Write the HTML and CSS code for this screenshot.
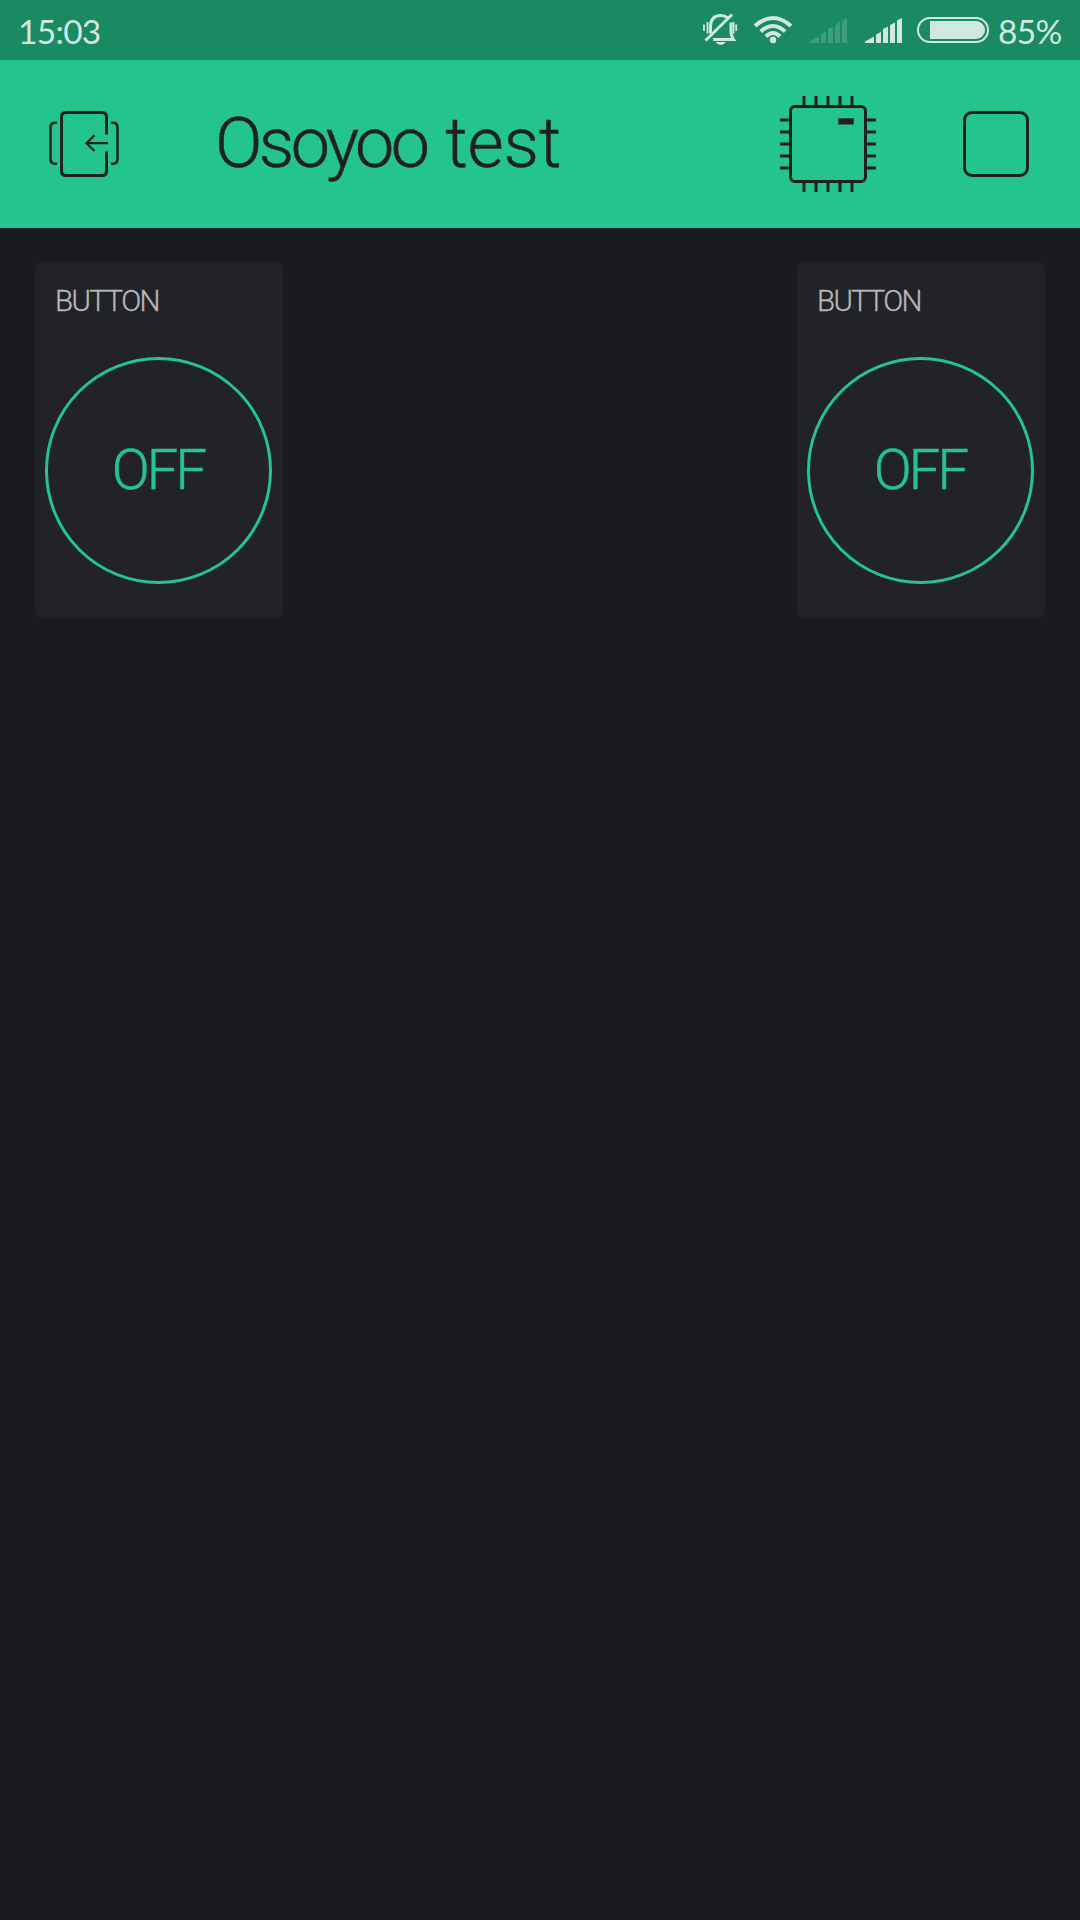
FILE: index.html
```html
<!DOCTYPE html>
<html lang="en">
<head>
<meta charset="utf-8">
<title>Osoyoo test</title>
<link rel="stylesheet" href="styles.css">
</head>
<body>
<div class="status-bar">
  <span class="clock">15:03</span>
  <div class="status-icons">
    <svg class="bell" width="36" height="36" viewBox="702 12 36 36" fill="none" stroke="currentColor" stroke-width="3">
      <path d="M710.5 33.500V25.500Q711.500 15.500 720.500 15.500Q725 15.500 728 18"/>
      <path d="M731 22.500V31.500Q731 36 733.500 39.500H713"/>
      <path d="M705.500 40.500L732 14.500"/>
      <path d="M704 24.500V31M707.500 22V33.500M733.500 22V33.500M736.200 24.500V31" stroke-width="1.800"/>
      <path d="M715.500 42H726Q723.500 45 720.700 45T715.500 42Z" fill="currentColor" stroke="none"/>
    </svg>
    <svg class="wifi" width="40" height="36" viewBox="753 12 40 36" fill="none" stroke="currentColor" stroke-width="4">
      <path d="M755 26Q773 10 791 26M760.800 31.500Q773 20.500 785.200 31.500M766 36.500Q773 29.500 780 36.500"/>
      <circle cx="773" cy="40" r="3.200" fill="currentColor" stroke="none"/>
    </svg>
    <svg class="signal signal-off" width="37" height="36" viewBox="810 12 37 36" fill="currentColor">
      <path d="M810 43V41.500L819 36.500V43ZM821 43V34.500L826 32V43ZM828 43V29L833 26.500V43ZM835 43V25L840 22.500V43ZM842 43V20.500L847 18V43Z"/>
    </svg>
    <svg class="signal signal-on" width="37" height="36" viewBox="810 12 37 36" fill="currentColor">
      <path d="M810 43V41.500L819 36.500V43ZM821 43V34.500L826 32V43ZM828 43V29L833 26.500V43ZM835 43V25L840 22.500V43ZM842 43V20.500L847 18V43Z"/>
    </svg>
    <svg class="battery" width="72" height="26" viewBox="0 0 72 26">
      <rect x="1" y="1" width="70" height="24" rx="12" fill="none" stroke="currentColor" stroke-width="2"/>
      <path d="M13 4H59A9 9 0 0 1 59 22H13Z" fill="currentColor"/>
    </svg>
    <span class="charge">85%</span>
  </div>
</div>

<header class="app-bar">
  <svg class="exit-icon" width="70" height="66" viewBox="49 111 70 66" fill="none" stroke="currentColor" stroke-width="3">
    <path d="M106.500 134.500V117Q106.500 112.500 102 112.500H66Q61.500 112.500 61.500 117V171Q61.500 175.500 66 175.500H102Q106.500 175.500 106.500 171V151.500"/>
    <path d="M57 122.800H55Q50.500 122.800 50.500 127.500V159Q50.500 163.700 55 163.700H57M111 122.800H113Q117.500 122.800 117.500 127.500V159Q117.500 163.700 113 163.700H111" stroke-width="2.500"/>
    <path d="M108 143.200H86.500M94.500 135.300L86.500 143.200L94.500 151" stroke-width="2.200"/>
  </svg>
  <h1 class="title"><span class="tight">Osoyoo</span> test</h1>
  <svg class="chip-icon" width="96" height="96" viewBox="0 0 96 96" fill="none" stroke="currentColor" stroke-width="3">
    <rect x="10.500" y="10.500" width="75" height="75" rx="4.500"/>
    <path d="M24 0V9M36 0V9M48 0V9M60 0V9M72 0V9M24 87V96M36 87V96M48 87V96M60 87V96M72 87V96M0 24H9M0 36H9M0 48H9M0 60H9M0 72H9M87 24H96M87 36H96M87 48H96M87 60H96M87 72H96"/>
    <rect x="58.300" y="22.300" width="15.400" height="6.200" fill="currentColor" stroke="none"/>
  </svg>
  <div class="stop-icon"></div>
</header>

<main class="board">
  <section class="widget">
    <h2 class="label">BUTTON</h2>
    <div class="toggle"><span>OFF</span></div>
  </section>
  <section class="widget">
    <h2 class="label">BUTTON</h2>
    <div class="toggle"><span>OFF</span></div>
  </section>
</main>
</body>
</html>
```

FILE: styles.css
```css
* { box-sizing: border-box; }

body {
  margin: 0;
  min-height: 1920px;
  background: #1a1b20;
  font-family: Roboto, "Liberation Sans", sans-serif;
}

svg { display: block; flex: none; }

.status-bar {
  height: 60px;
  padding: 0 18px 0 18px;
  display: flex;
  align-items: center;
  justify-content: space-between;
  background: #1a8a63;
  color: #d1e8e0;
  font-family: Lato, sans-serif;
  font-size: 33.5px;
  letter-spacing: -0.7px;
  line-height: 60px;
}

.clock { padding-top: 1px; }

.status-icons { display: flex; align-items: center; }

.wifi { margin-left: 15px; }
.signal-off { margin-left: 17px; color: #409d7c; }
.signal-on { margin-left: 18px; }
.battery { margin-left: 15px; }

.charge {
  width: 64px;
  margin-left: 9px;
  padding-top: 1px;
  white-space: nowrap;
}

.app-bar {
  height: 168px;
  padding: 0 51px 0 49px;
  display: flex;
  align-items: center;
  background: #24c48e;
  color: #1f2024;
}

.title {
  flex: 1;
  margin: 0 0 2px 96px;
  font-size: 70px;
  font-weight: 300;
  letter-spacing: -0.2px;
  word-spacing: 2px;
  line-height: 80px;
  white-space: nowrap;
  -webkit-text-stroke: 0.5px currentColor;
}

.tight { letter-spacing: -3.6px; }

.stop-icon {
  width: 66px;
  height: 66px;
  margin-left: 87px;
  border: 3px solid currentColor;
  border-radius: 9px;
}

.board {
  padding: 34px 35px;
  display: flex;
  justify-content: space-between;
}

.widget {
  width: 248px;
  height: 356px;
  padding-top: 20px;
  border-radius: 7px;
  background: #222328;
}

.label {
  margin: 0 0 0 20px;
  color: #b9b9ba;
  font-size: 29.5px;
  font-weight: 300;
  letter-spacing: -1.6px;
  line-height: 38px;
  -webkit-text-stroke: 0.3px currentColor;
}

.toggle {
  width: 227px;
  height: 227px;
  margin: 36.5px 0 0 10px;
  padding-right: 1px;
  display: flex;
  align-items: center;
  justify-content: center;
  border: 3px solid #24c48e;
  border-radius: 50%;
  color: #24c48e;
  font-size: 56px;
  font-weight: 300;
  letter-spacing: -2.8px;
  -webkit-text-stroke: 0.5px currentColor;
}
```
